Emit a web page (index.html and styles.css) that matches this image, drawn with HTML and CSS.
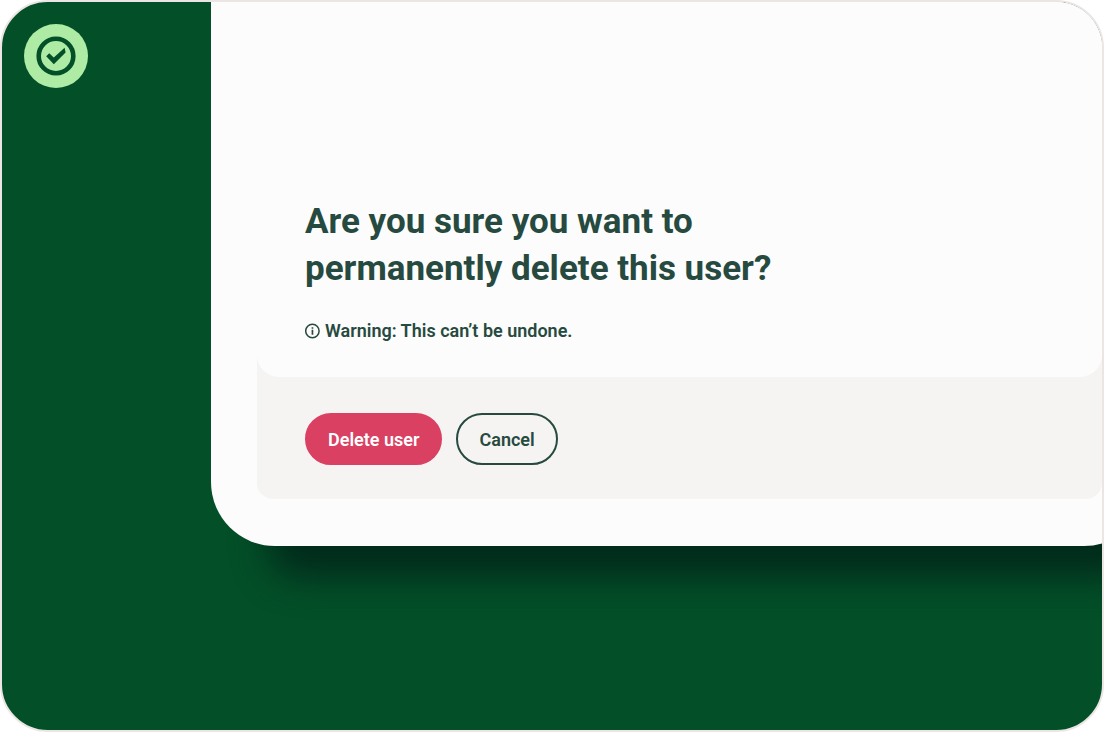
FILE: index.html
```html
<!DOCTYPE html>
<html lang="en">
<head>
<meta charset="utf-8">
<meta name="viewport" content="width=device-width, initial-scale=1">
<title>Delete user</title>
<link rel="stylesheet" href="styles.css">
</head>
<body>
<main class="frame">
  <div class="badge">
    <svg class="badge-icon" viewBox="0 0 64 64" aria-hidden="true">
      <circle cx="32" cy="32" r="32" fill="#aeeca6"/>
      <circle cx="32" cy="32" r="17.3" fill="none" stroke="#034f28" stroke-width="4.6"/>
      <path d="M22.2 32.3 L25.2 29.3 L29.8 33.6 L40.6 23.8 L41.6 28.4 L29.8 40.2 Z" fill="#034f28"/>
    </svg>
  </div>
  <section class="dialog" role="dialog" aria-labelledby="dialog-title">
    <div class="card">
      <div class="card-body">
        <h1 class="title" id="dialog-title">Are you sure you want to<br>permanently delete this user?</h1>
        <p class="warning">
          <svg class="info-icon" viewBox="0 0 16 16" aria-hidden="true">
            <circle cx="7.4" cy="8" r="6.7" fill="none" stroke="#274a40" stroke-width="1.5"/>
            <path d="M6.6 6.8h1.7v4.9H6.6zM6.6 4.2h1.7v1.6H6.6z" fill="#274a40"/>
          </svg>
          <span>Warning: This can’t be undone.</span>
        </p>
      </div>
      <div class="actions">
        <button class="button button-danger" type="button">Delete user</button>
        <button class="button button-outline" type="button">Cancel</button>
      </div>
    </div>
  </section>
</main>
</body>
</html>
```
FILE: styles.css
```css
* {
  box-sizing: border-box;
}

body {
  margin: 0;
  background: #fff;
  color: #274a40;
  font-family: Roboto, "Liberation Sans", sans-serif;
}

.frame {
  display: flex;
  align-items: flex-start;
  min-height: 100vh;
  overflow: hidden;
  border: 2px solid #ebe6e3;
  border-radius: 48px;
  background: linear-gradient(#fcfcfc, #fcfcfc) right top / 80px 80px no-repeat padding-box, #034f28;
}

.badge {
  flex: 0 0 209px;
  padding: 22px;
}

.badge-icon {
  display: block;
  width: 64px;
  height: 64px;
}

.dialog {
  flex: 1;
  margin-right: -46px;
  padding: 0 46px 47px;
  border-radius: 0 0 64px 64px;
  background: #fcfcfc;
  box-shadow: 26px 62px 34px -30px #022c1c;
}

.card {
  overflow: hidden;
  border-radius: 0 0 16px 16px;
  background: #f6f4f2;
}

.card-body {
  padding: 196px 48px 34px;
  border-radius: 0 0 22px 22px;
  background: #fcfcfc;
}

.title {
  margin: 0 0 27px;
  font-size: 35px;
  font-weight: 700;
  line-height: 47px;
}

.warning {
  display: flex;
  align-items: center;
  gap: 4px;
  margin: 0;
  font-size: 18px;
  font-weight: 600;
  line-height: 24px;
}

.info-icon {
  width: 16px;
  height: 16px;
}

.actions {
  display: flex;
  gap: 14px;
  padding: 36px 48px 34px;
}

.button {
  height: 52px;
  padding: 0 21px;
  border: 2px solid;
  border-radius: 26px;
  font-family: inherit;
  font-size: 18px;
  font-weight: 600;
}

.button-danger {
  border-color: #da4062;
  background: #da4062;
  color: #fff;
}

.button-outline {
  border-color: #274a40;
  background: transparent;
  color: #274a40;
}
```
